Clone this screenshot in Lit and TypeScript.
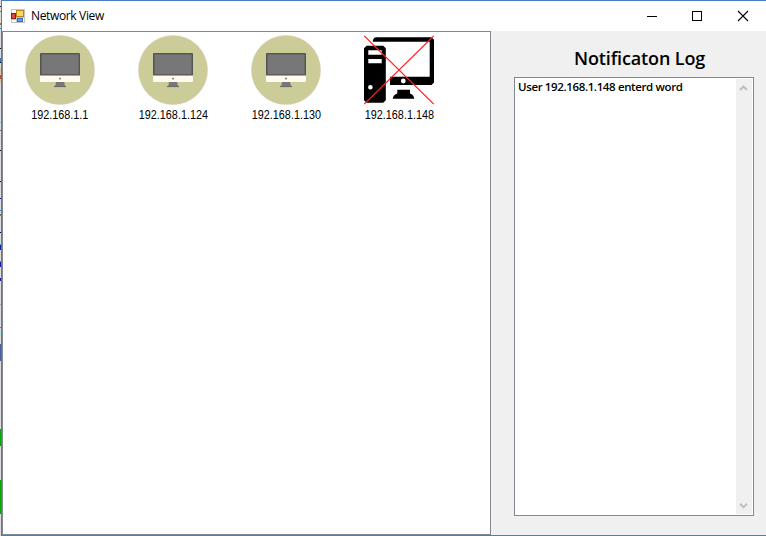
import { LitElement, html, css, svg } from "lit";
import { customElement, property } from "lit/decorators.js";

@customElement("host-icon")
class HostIcon extends LitElement {
  @property({ type: Boolean }) blocked = false;

  static styles = css`
    :host { display: block; width: 70px; height: 70px; }
    svg { display: block; }
  `;

  online() {
    return svg`
      <circle cx="35" cy="35" r="34.6" fill="#cccc99" stroke="#dccdb8" stroke-width=".5"/>
      <path d="M16 18H54Q55 18 55 19V41H15V19Q15 18 16 18Z" fill="#555"/>
      <rect x="16.6" y="19.4" width="37" height="19.8" fill="#777"/>
      <path d="M15 40.6H55V46Q55 47 54 47H16Q15 47 15 46Z" fill="#fffaf0"/>
      <rect x="34.2" y="42.8" width="1.6" height="1.6" fill="#666"/>
      <path d="M31 47H39.2L39.8 50.4L41 51.2V52H29V51.2L30.4 50.4Z" fill="#777"/>
      <path d="M29 51.3H41V52.1H29Z" fill="#666"/>`;
  }

  offline() {
    return svg`
      <path fill-rule="evenodd" d="M2.5 10.7H19.2L21.8 13.3V65.2L19.2 67.8H2.5L0 65.2V13.3ZM4.3 15.3V19.7H17.7V15.3ZM4.3 24V28.3H17.7V24ZM6.4 50A2.3 2.3 0 1 0 6.4 54.6A2.3 2.3 0 1 0 6.4 50Z"/>
      <path fill-rule="evenodd" d="M8.7 6.7Q8.9 2.4 12.5 2.3H67.5L70 4.8V47.6L67.5 50H26V41.7H65.7V6.7ZM39.3 43.6A2.4 2.4 0 1 0 39.3 48.4A2.4 2.4 0 1 0 39.3 43.6Z"/>
      <path d="M33.3 54.7H46V58.6Q49.5 59.5 50.3 63.7H28.7Q29.5 59.5 33.3 58.6Z"/>
      <path d="M.3 1L69.7 69M69.7 1L.3 69" stroke="#ff2020" stroke-width="1.1"/>`;
  }

  render() {
    return html`<svg width="70" height="70" viewBox="0 0 70 70">${this.blocked ? this.offline() : this.online()}</svg>`;
  }
}

@customElement("app-root")
class AppRoot extends LitElement {
  hosts = [
    { ip: "192.168.1.1", blocked: false },
    { ip: "192.168.1.124", blocked: false },
    { ip: "192.168.1.130", blocked: false },
    { ip: "192.168.1.148", blocked: true },
  ];
  log = ["User 192.168.1.148 enterd word"];

  static styles = css`
    * { box-sizing: border-box; }
    :host { display: flex; width: 766px; height: 536px; overflow: hidden; color: #000;
      font: 12px/16px "Open Sans", "Noto Sans", sans-serif; }
    .edge { width: 1px; flex: none; }
    .edge svg { display: block; }
    .window { flex: 1; display: flex; flex-direction: column; border: solid #4a7cc4; border-width: 1px 0 1px 1px; background: #f0f0f0; }
    .titlebar { height: 30px; flex: none; display: flex; align-items: center; background: #fff; padding-left: 9px; }
    .title { margin-left: 6px; letter-spacing: -.35px; flex: 1; }
    .body { flex: 1; display: flex; min-height: 0; }
    .list { width: 489px; border: 1px solid #828790; background: #fff; display: flex; gap: 43px; padding: 3px 0 0 22px; }
    .host { width: 70px; display: flex; flex-direction: column; align-items: center; }
    .ip { margin-top: 2px; white-space: nowrap; font-family: "Liberation Sans", sans-serif; transform: scaleX(.9); }
    .panel { width: 240px; margin-left: 23px; display: flex; flex-direction: column; }
    .heading { margin: 15px 0 0 60px; height: 31px; font-size: 18px; line-height: 24px; font-weight: 600; letter-spacing: -.13px; white-space: nowrap; }
    .log { height: 439px; border: 1px solid #828790; background: #fff; display: flex; padding: 1px; }
    .lines { flex: 1; padding-left: 2px; font-weight: 600; font-size: 11.5px; white-space: nowrap; letter-spacing: -.37px; }
    .scroll { width: 16px; background: #f0f0f0; display: flex; flex-direction: column; justify-content: space-between; }
    svg { display: block; }
  `;

  render() {
    const marks: [number, number, string][] = [
      [6, 1, "#222"], [11, 1, "#4a7cc4"], [23, 2, "#a63"], [28, 1, "#38c"], [48, 1, "#111"],
      [58, 4, "#2f7fc9"], [62, 1, "#111"], [68, 6, "#dfc494"], [75, 4, "#b5542d"], [79, 4, "#dfc494"],
      [122, 1, "#7ac4f0"], [130, 1, "#777"], [150, 1, "#111"], [181, 1, "#111"], [198, 1, "#008"],
      [210, 1, "#38c"], [214, 2, "#875"], [232, 1, "#006"], [244, 1, "#3ad"], [245, 5, "#1a1aa8"],
      [261, 1, "#3ad"], [262, 5, "#1a1aa8"], [278, 3, "#1a1aa8"], [304, 1, "#aaa"], [327, 1, "#777"],
      [334, 1, "#7ee"], [344, 17, "#485f9e"], [429, 17, "#00a800"], [480, 34, "#00a800"],
    ];
    return html`
      <div class="edge"><svg width="1" height="536" shape-rendering="crispEdges">
        <rect width="1" height="536" fill="#dcdcdc"/>
        ${marks.map(([y, h, c]) => svg`<rect y=${y} width="1" height=${h} fill=${c}/>`)}
      </svg></div>
      <div class="window">
        <div class="titlebar">
          <svg width="14" height="14" viewBox="0 0 14 14">
            <rect width="14" height="14" fill="#c4c4c4"/>
            <path d="M1 1H5V4H1ZM1 11H5V13H1ZM12 9H13V13H12Z" fill="#fff"/>
            <rect x=".5" y="4.5" width="4" height="5" fill="#d94b3b" stroke="#8f1b17"/>
            <rect x="5.5" y="1.5" width="7" height="6" fill="#ffd762" stroke="#b78818"/>
            <rect x="6.5" y="9.5" width="5" height="3" fill="#6b9fee" stroke="#3a68c4"/>
          </svg>
          <span class="title">Network View</span>
          <svg width="119" height="14" viewBox="0 0 119 14" fill="none" stroke="#000">
            <path d="M0 7.5H10M45.5 2.5H54.5V11.5H45.5Z" shape-rendering="crispEdges"/>
            <path d="M91 2L101 12M101 2L91 12" stroke-width="1.1"/>
          </svg>
        </div>
        <div class="body">
          <div class="list">
            ${this.hosts.map((h) => html`<div class="host">
              <host-icon ?blocked=${h.blocked}></host-icon><span class="ip">${h.ip}</span>
            </div>`)}
          </div>
          <div class="panel">
            <div class="heading">Notificaton Log</div>
            <div class="log">
              <div class="lines">${this.log.map((l) => html`<div>${l}</div>`)}</div>
              <div class="scroll">
                <svg width="16" height="17"><path d="M4 11L7.5 7.5L11 11" fill="none" stroke="#bfbfbf" stroke-width="2"/></svg>
                <svg width="16" height="17"><path d="M4 6.7L7.5 10.2L11 6.7" fill="none" stroke="#bfbfbf" stroke-width="2"/></svg>
              </div>
            </div>
          </div>
        </div>
      </div>`;
  }
}
